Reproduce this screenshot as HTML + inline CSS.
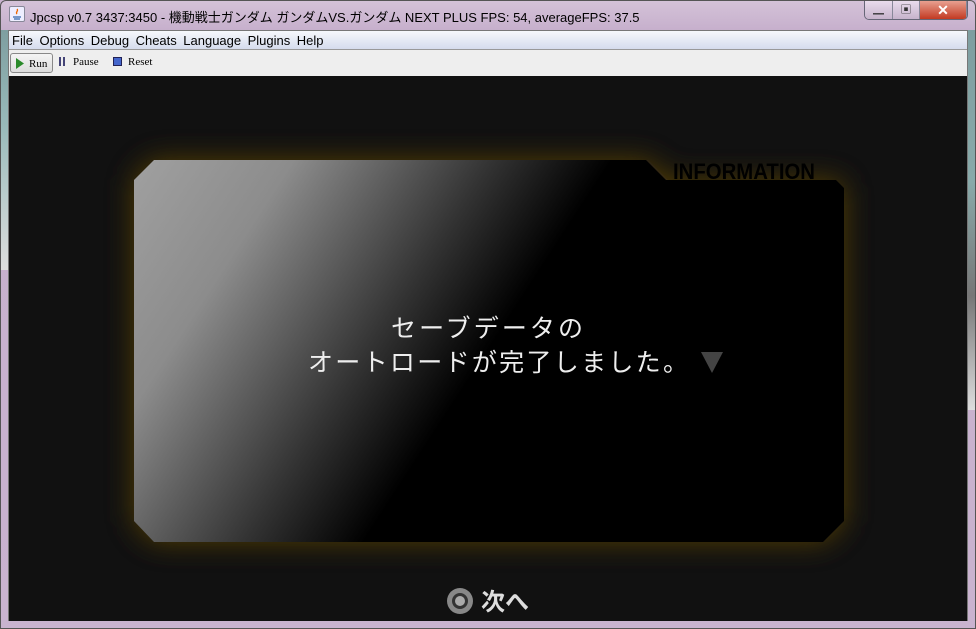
<!DOCTYPE html>
<html><head><meta charset="utf-8"><style>
*{margin:0;padding:0;box-sizing:border-box}
body{width:976px;height:629px;overflow:hidden;background:#c9b3cf;font-family:"Liberation Sans","Noto Sans CJK JP",sans-serif;position:relative}
.frame{position:absolute;inset:0;border:1px solid #555;border-radius:6px 6px 0 0;background:linear-gradient(180deg,#d4c2d8 0,#c6afcc 30px,#c9b3cf 100%)}
.leftstrip{position:absolute;left:1px;top:30px;width:7px;height:240px;background:linear-gradient(180deg,#7e9ea0,#9bb 40%,#ddd 100%)}
.rightstrip{position:absolute;right:1px;top:30px;width:7px;height:380px;background:linear-gradient(180deg,#7e9ea0,#8aa 40%,#777 70%,#ddd 100%)}
.title{position:absolute;left:30px;top:7px;font-size:13px;color:#000}
.icon{position:absolute;left:9px;top:6px;width:16px;height:16px;border:1px solid #889;background:#eef;border-radius:2px}
.btns{position:absolute;right:8px;top:1px;height:19px;display:flex;border:1px solid #667;border-top:none;border-radius:0 0 5px 5px;overflow:hidden}
.btns div{height:18px;border-right:1px solid #889;background:linear-gradient(#e9dcec,#c6b3cc);color:#333;font-size:11px;text-align:center;line-height:18px}
.client{position:absolute;left:8px;top:30px;width:960px;height:591px;background:#111;border:1px solid #777}
.menu{height:19px;background:linear-gradient(#f6f8fc,#d5dced);border-bottom:1px solid #999;font-size:13px;line-height:19px;padding-left:3px}
.menu span{margin-right:6.5px}
.tool{height:26px;background:#eee;position:relative;font-family:"Liberation Serif",serif;font-size:11px}
.run{position:absolute;left:1px;top:3px;width:43px;height:20px;border:1px solid #888;border-radius:3px;background:linear-gradient(#f4f4f4,#ddd)}
.game{position:absolute;left:0;top:46px;width:958px;height:544px;background:#111;overflow:hidden}
</style></head><body>
<div class="frame"></div>
<div class="leftstrip"></div><div class="rightstrip"></div>
<div class="icon"><svg width="14" height="14"><path d="M3 10h8M4 12h6" stroke="#36a" stroke-width="1.2"/><path d="M7 2c2 2-2 3 0 5" stroke="#e60" fill="none" stroke-width="1.3"/></svg></div>
<div class="title">Jpcsp v0.7 3437:3450 - 機動戦士ガンダム ガンダムVS.ガンダム NEXT PLUS FPS: 54, averageFPS: 37.5</div>
<div class="btns"><div style="width:28px">▁</div><div style="width:27px">▣</div><div style="width:47px;background:linear-gradient(#e8a090,#c23a22);color:#fff;font-weight:bold;font-size:14px">✕</div></div>
<div class="client">
<div class="menu"><span>File</span><span>Options</span><span>Debug</span><span>Cheats</span><span>Language</span><span>Plugins</span><span>Help</span></div>
<div class="tool">
<div class="run"><svg style="position:absolute;left:5px;top:4px" width="8" height="11"><path d="M0 0L8 5.5L0 11Z" fill="#2a8a2a"/></svg><span style="position:absolute;left:18px;top:4px">Run</span></div>
<span style="position:absolute;left:50px;top:7px;height:9px;border-left:2px solid #447;border-right:2px solid #447;width:6px"></span><span style="position:absolute;left:64px;top:6px">Pause</span>
<span style="position:absolute;left:104px;top:7px;width:9px;height:9px;background:#46c;border:1px solid #225"></span><span style="position:absolute;left:119px;top:6px">Reset</span>
</div>
<div class="game">
<svg width="958" height="544" style="position:absolute;left:0;top:0">
<defs>
<linearGradient id="g" x1="0" y1="0" x2="1" y2="0.35" gradientUnits="objectBoundingBox">
<stop offset="0" stop-color="#a0a0a0"/><stop offset="0.2" stop-color="#8c8c8c"/><stop offset="0.45" stop-color="#333"/><stop offset="0.6" stop-color="#000"/><stop offset="1" stop-color="#000"/></linearGradient>
<filter id="b" x="-20%" y="-20%" width="140%" height="140%"><feGaussianBlur stdDeviation="14"/></filter>
</defs>
<path d="M145 83H639L659 103H827L835 111V444L814 465H145L125 444V103Z" fill="#5a4210" filter="url(#b)" opacity="0.9"/>
<text x="664" y="102" font-family="Liberation Sans,sans-serif" font-weight="bold" font-size="22" fill="#000" textLength="142" lengthAdjust="spacingAndGlyphs">INFORMATION</text>
<path d="M145 83H637L657 103H827L835 111V444L814 465H145L125 444V103Z" fill="url(#g)"/>
<text x="478" y="260" text-anchor="middle" font-family="Liberation Sans,Noto Sans CJK JP,sans-serif" font-size="25" fill="#eee" textLength="192" lengthAdjust="spacing">セーブデータの</text>
<text x="299" y="294" font-family="Liberation Sans,Noto Sans CJK JP,sans-serif" font-size="25" fill="#eee" textLength="380" lengthAdjust="spacing">オートロードが完了しました。</text>
<path d="M692 275H714L703 296Z" fill="#444"/>
<circle cx="451" cy="524" r="13" fill="#888"/><circle cx="451" cy="524" r="8" fill="#333"/><circle cx="451" cy="524" r="5" fill="#aaa"/>
<text x="472" y="533" font-family="Liberation Sans,Noto Sans CJK JP,sans-serif" font-weight="bold" font-size="24" fill="#ddd">次へ</text>
</svg>
</div>
</div>
</body></html>
